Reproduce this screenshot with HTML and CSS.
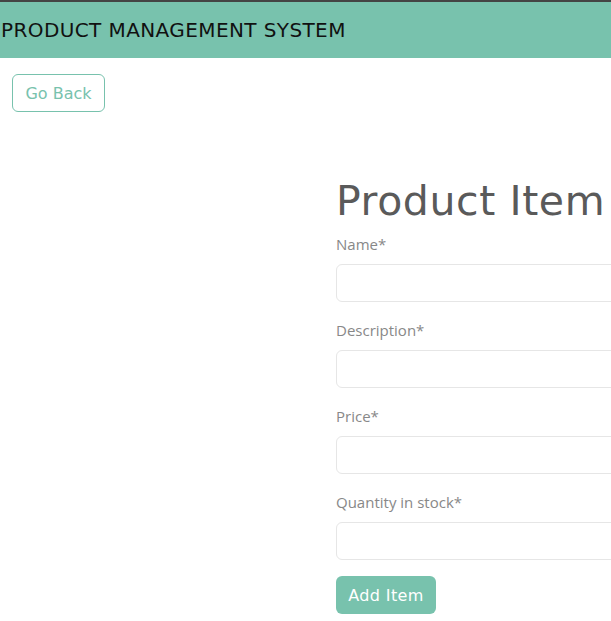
FILE: index.html
```html
<!DOCTYPE html>
<html>
<head>
<meta charset="utf-8">
<link rel="stylesheet" href="styles.css">
</head>
<body>
<div class="topline"></div>
<header class="navbar"><span class="brand">PRODUCT MANAGEMENT SYSTEM</span></header>
<div class="toolbar"><button class="btn-outline">Go Back</button></div>
<main class="content">
  <div class="spacer"></div>
  <form class="form">
    <h1 class="title">Product Item</h1>
    <label class="label">Name*</label>
    <input class="field" type="text">
    <label class="label">Description*</label>
    <input class="field" type="text">
    <label class="label">Price*</label>
    <input class="field" type="text">
    <label class="label">Quantity in stock*</label>
    <input class="field" type="text">
    <button class="btn-primary" type="button">Add Item</button>
  </form>
</main>
</body>
</html>
```
FILE: styles.css
```css
html, body { margin: 0; padding: 0; background: #fff; overflow: hidden; }
body { width: 611px; height: 621px; font-family: "Open Sans", sans-serif; }
.topline { height: 2px; background: #444; }
.navbar { height: 56px; background: #78c2ad; display: flex; align-items: center; padding-left: 1px; }
.brand { font-family: "DejaVu Sans", sans-serif; font-size: 20px; color: #111; letter-spacing: 0.4px; }
.toolbar { padding: 16px 12px 0; }
.btn-outline { font-family: "DejaVu Sans", sans-serif; font-size: 16px; color: #78c2ad; background: #fff; border: 1px solid #78c2ad; border-radius: 6px; height: 38px; width: 93px; padding: 0; }
.content { display: flex; padding-top: 64px; }
.spacer { width: 336px; flex: none; }
.form { display: flex; flex-direction: column; width: 320px; flex: none; }
.title { font-family: "DejaVu Sans", sans-serif; font-weight: 400; font-size: 41px; color: #5a5a5a; margin: 0 0 8px; line-height: 50px; letter-spacing: 0.6px; white-space: nowrap; }
.label { font-size: 15px; color: #888; line-height: 20px; margin-bottom: 10px; }
.field { height: 38px; box-sizing: border-box; border: 1px solid #e6e6e6; border-radius: 6px; margin-bottom: 18px; }
.btn-primary { align-self: flex-start; margin-top: -2px; font-family: "DejaVu Sans", sans-serif; font-size: 16px; letter-spacing: 0.4px; color: #fff; background: #78c2ad; border: 0; border-radius: 6px; height: 38px; width: 100px; padding: 0; }
```
